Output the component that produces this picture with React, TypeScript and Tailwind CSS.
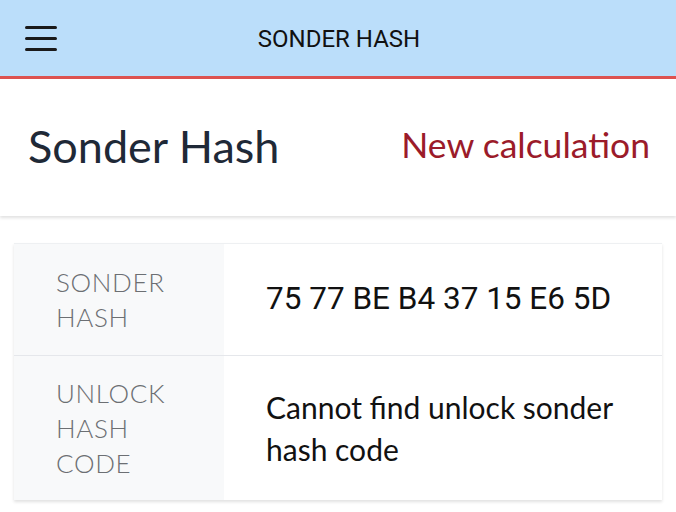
export default function App() {
  return (
    <div className="w-[676px] h-[512px] bg-white overflow-hidden" style={{ fontFamily: "Lato, 'Noto Sans', sans-serif" }}>
      <header className="h-[79px] bg-[#bbdefa] border-b-[3px] border-[#dd5250] flex items-center relative">
        <div className="ml-[25px] w-[32px] flex flex-col gap-[8px]">
          <div className="h-[3px] bg-[#1a1a1a] rounded-sm" />
          <div className="h-[3px] bg-[#1a1a1a] rounded-sm" />
          <div className="h-[3px] bg-[#1a1a1a] rounded-sm" />
        </div>
        <div className="absolute left-0 right-0 top-[21px] text-center text-[24px] text-[#111] pl-[2px]" style={{ fontFamily: "Roboto, sans-serif" }}>
          SONDER HASH
        </div>
      </header>
      <section className="h-[137px] flex items-center justify-between pl-[28px] pr-[26px] shadow-[0_2px_3px_rgba(0,0,0,0.12)] pb-[2px]">
        <h1 className="text-[45px] text-[#1f2937] leading-none">Sonder Hash</h1>
        <span className="text-[35.5px] text-[#9b1b2a] leading-none mb-[3px]">New calculation</span>
      </section>
      <div className="mt-[27px] mx-[14px] border-t border-[#eef0f2] shadow-[0_2px_3px_rgba(0,0,0,0.12)]">
        <div className="flex h-[112px] border-b border-[#e5e7eb]">
          <div className="w-[210px] bg-[#f8f9fa] pl-[42px] flex flex-col justify-center text-[26px] leading-[35px] text-[#6c6f73] tracking-wide font-light">
            <span>SONDER</span>
            <span>HASH</span>
          </div>
          <div className="flex-1 flex items-center pl-[42px] text-[31.5px] text-[#111] pb-[2px]" style={{ fontFamily: "Roboto, sans-serif" }}>
            75 77 BE B4 37 15 E6 5D
          </div>
        </div>
        <div className="flex h-[144px]">
          <div className="w-[210px] bg-[#f8f9fa] pl-[42px] flex flex-col justify-center text-[26px] leading-[35px] text-[#6c6f73] tracking-wide font-light">
            <span>UNLOCK</span>
            <span>HASH</span>
            <span>CODE</span>
          </div>
          <div className="flex-1 flex items-center pl-[42px] pr-[10px] text-[30px] leading-[42px] text-[#111]">
            <span>Cannot find unlock sonder<br />hash code</span>
          </div>
        </div>
      </div>
    </div>
  );
}
